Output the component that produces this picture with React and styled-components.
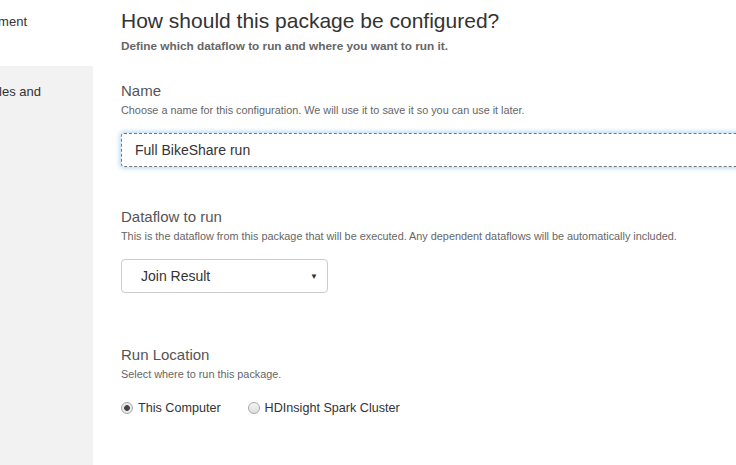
import React from 'react';
import styled, { createGlobalStyle } from 'styled-components';

const GlobalStyle = createGlobalStyle`
    html, body {
        margin: 0;
        padding: 0;
        background: #fff;
        font-family: "Liberation Sans", Arial, sans-serif;
        color: #333;
    }
`;

const Page = styled.div`
    display: flex;
    width: 736px;
    height: 465px;
    overflow: hidden;
`;

const Sidebar = styled.div`
    width: 93px;
    flex-shrink: 0;
    display: flex;
    flex-direction: column;
    overflow: hidden;
`;

// nav labels are cut by the left edge of the window, so they end at a fixed x
const NavItem = styled.div`
    height: ${props => props.height ? props.height + 'px' : 'auto'};
    padding: ${props => props.top}px ${props => 93 - props.end}px 0 0;
    box-sizing: border-box;
    display: flex;
    justify-content: flex-end;
    align-items: flex-start;
    background: ${props => props.active ? '#f2f2f2' : '#fff'};
    font-size: 13px;
    line-height: 16px;
    color: #333;
    white-space: nowrap;
    flex-shrink: 0;
    ${props => props.grow ? 'flex-grow: 1;' : ''}
`;

const Main = styled.div`
    flex: 1;
    padding: 9px 0 0 28px;
    min-width: 0;
`;

const Title = styled.h1`
    margin: 0;
    font-size: 21px;
    font-weight: normal;
    line-height: 24px;
    color: #333;
`;

const Subtitle = styled.div`
    margin-top: 6px;
    font-size: 11.8px;
    font-weight: bold;
    line-height: 14px;
    color: #666;
`;

const Section = styled.div`
    margin-top: ${props => props.gap}px;
`;

const Label = styled.div`
    font-size: 15px;
    line-height: 18px;
    color: #555;
`;

const Help = styled.div`
    margin-top: 4px;
    font-size: 10.85px;
    line-height: 13px;
    color: #666;
`;

const TextInput = styled.div`
    margin-top: 16px;
    height: 34px;
    box-sizing: border-box;
    margin-right: -6px;
    border: 1px dashed #777;
    border-radius: 3px;
    box-shadow: 0 0 5px 1px rgba(102, 175, 233, 0.55);
    padding: 0 13px;
    display: flex;
    align-items: center;
    font-size: 14px;
    color: #333;
`;

const Select = styled.div`
    margin-top: 16px;
    width: 207px;
    height: 34px;
    box-sizing: border-box;
    border: 1px solid #ccc;
    border-radius: 4px;
    padding: 0 9px 0 19px;
    display: flex;
    align-items: center;
    justify-content: space-between;
    font-size: 14px;
    color: #333;
`;

const Caret = styled.span`
    font-size: 8px;
    color: #333;
`;

const RadioRow = styled.div`
    margin-top: 19px;
    display: flex;
    align-items: center;
    gap: 27px;
    line-height: 16px;
`;

const RadioOption = styled.label`
    display: flex;
    align-items: center;
    gap: 5px;
    font-size: 12.6px;
    color: #333;
`;

const RadioDot = styled.span`
    width: 12px;
    height: 12px;
    border-radius: 50%;
    box-sizing: border-box;
    border: 1px solid #a9a9a9;
    background: ${props => props.checked
        ? 'radial-gradient(circle, #444 0, #444 2.5px, #e9e9e9 3.2px, #e9e9e9 100%)'
        : 'linear-gradient(#f5f5f5, #dedede)'};
`;

export default function App() {
    return (
        <Page>
            <GlobalStyle />
            <Sidebar>
                <NavItem height={66} top={14} end={27}>
                    Environment
                </NavItem>
                <NavItem active grow top={18} end={41}>
                    Variables and
                </NavItem>
            </Sidebar>
            <Main>
                <Title>How should this package be configured?</Title>
                <Subtitle>Define which dataflow to run and where you want to run it.</Subtitle>

                <Section gap={29}>
                    <Label>Name</Label>
                    <Help>Choose a name for this configuration. We will use it to save it so you can use it later.</Help>
                    <TextInput>Full BikeShare run</TextInput>
                </Section>

                <Section gap={41}>
                    <Label>Dataflow to run</Label>
                    <Help>This is the dataflow from this package that will be executed. Any dependent dataflows will be automatically included.</Help>
                    <Select>
                        <span>Join Result</span>
                        <Caret>▼</Caret>
                    </Select>
                </Section>

                <Section gap={53}>
                    <Label>Run Location</Label>
                    <Help>Select where to run this package.</Help>
                    <RadioRow>
                        <RadioOption><RadioDot checked />This Computer</RadioOption>
                        <RadioOption><RadioDot />HDInsight Spark Cluster</RadioOption>
                    </RadioRow>
                </Section>
            </Main>
        </Page>
    );
}
